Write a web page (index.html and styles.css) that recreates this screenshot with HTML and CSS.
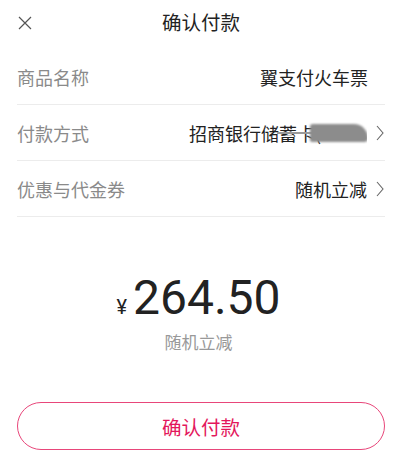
FILE: index.html
```html
<!DOCTYPE html>
<html lang="zh-CN">
<head>
<meta charset="utf-8">
<title>确认付款</title>
<link rel="stylesheet" href="styles.css">
</head>
<body>
<div class="page">
  <header class="header">
    <svg class="close" width="14" height="14" viewBox="0 0 14 14"><path d="M1 1 L13 13 M13 1 L1 13" stroke="#555" stroke-width="1.2" fill="none"/></svg>
    <div class="title">确认付款</div>
  </header>
  <div class="list">
    <div class="row">
      <span class="label">商品名称</span>
      <span class="value">翼支付火车票</span>
    </div>
    <div class="row">
      <span class="label">付款方式</span>
      <span class="value with-arrow">
        <span class="card">招商银行储蓄卡(<span class="strike"></span><span class="mask"></span></span>
        <svg class="chev" width="8" height="16" viewBox="0 0 8 16"><path d="M1 1 L7 8 L1 15" stroke="#666" stroke-width="1.1" fill="none"/></svg>
      </span>
    </div>
    <div class="row">
      <span class="label">优惠与代金券</span>
      <span class="value with-arrow">
        <span>随机立减</span>
        <svg class="chev" width="8" height="16" viewBox="0 0 8 16"><path d="M1 1 L7 8 L1 15" stroke="#666" stroke-width="1.1" fill="none"/></svg>
      </span>
    </div>
  </div>
  <div class="amount-block">
    <div class="amount"><span class="yen">¥</span><span class="num">264.50</span></div>
    <div class="sub">随机立减</div>
  </div>
  <button class="pay">确认付款</button>
</div>
</body>
</html>
```
FILE: styles.css
```css
* { box-sizing: border-box; }
html, body { margin: 0; padding: 0; background: #fff; }
body {
  font-family: "Noto Sans CJK SC", "Noto Sans", sans-serif;
  color: #222;
  width: 402px;
  height: 457px;
  overflow: hidden;
}
.page { padding: 0 17px; }
.header {
  position: relative;
  height: 49px;
  display: flex;
  justify-content: center;
  align-items: flex-start;
  padding-top: 8px;
}
.close { position: absolute; left: 1px; top: 16px; }
.title { font-size: 19.5px; line-height: 28px; color: #222; }
.list { display: flex; flex-direction: column; }
.row {
  height: 56px;
  border-bottom: 1px solid #ececec;
  display: flex;
  align-items: center;
  justify-content: space-between;
  font-size: 18px;
}
.label { color: #8a8a8a; }
.value { color: #222; padding-right: 17px; }
.value.with-arrow { display: flex; align-items: center; gap: 9px; padding-right: 0; }
.card {
  position: relative;
  display: block;
  width: 178px;
  white-space: nowrap;
  overflow: hidden;
}
.strike {
  position: absolute;
  left: 88px;
  top: 12px;
  width: 40px;
  height: 2px;
  background: #9a9a9a;
}
.mask {
  position: absolute;
  left: 121px;
  top: 4px;
  width: 58px;
  height: 18px;
  background: #8c8c8c;
  border-radius: 6px 30px 8px 4px;
  filter: blur(1.2px);
}
.chev { margin-right: 1px; }
.amount-block {
  display: flex;
  flex-direction: column;
  align-items: center;
  padding-top: 57px;
  padding-right: 5px;
}
.amount { display: flex; align-items: baseline; gap: 6px; }
.yen { font-family: Roboto, "Noto Sans", sans-serif; font-size: 20px; color: #222; }
.num { font-family: Roboto, "Noto Sans", sans-serif; font-size: 48px; line-height: 48px; color: #222; }
.sub { font-size: 17px; color: #999; margin-top: 8px; line-height: 24px; }
.pay {
  display: block;
  width: 100%;
  height: 48px;
  margin-top: 48px;
  border: 1.5px solid #e8467a;
  border-radius: 24px;
  background: #fff;
  color: #e3175c;
  font-family: "Noto Sans CJK SC", "Noto Sans", sans-serif;
  font-size: 19.5px;
}
```
